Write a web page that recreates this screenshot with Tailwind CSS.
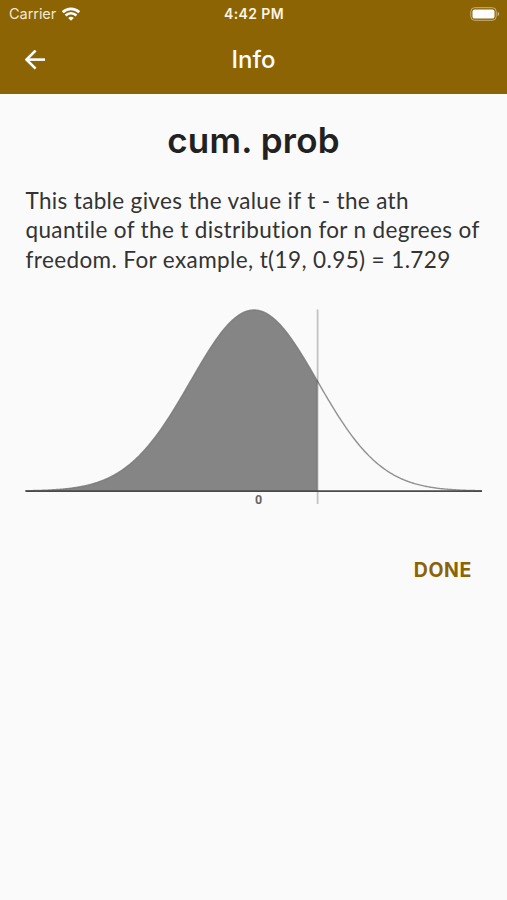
<!DOCTYPE html>
<html lang="en">
<head>
  <meta charset="UTF-8" />
  <meta name="viewport" content="width=device-width, initial-scale=1.0"/>
  <title>Info</title>
  <script src="https://cdn.jsdelivr.net/npm/@tailwindcss/browser@4"></script>
</head>
<body class="bg-[#fafafa] h-[900px] overflow-hidden font-['Lato','Open_Sans',sans-serif]">
  <header class="bg-[#8c6404] h-[94px] text-white">
    <!-- Status bar -->
    <div class="h-[27px] grid grid-cols-3 items-center pl-[9px] pr-[7px] font-['Inter',sans-serif]">
      <div class="flex items-center gap-[6px] text-[14.5px] text-[#f4e9d0]">
        <span class="tracking-[-0.05px]">Carrier</span>
        <svg class="w-[18px] h-[14px]" viewBox="0 0 18 14" fill="none" stroke="#fff" stroke-width="2.7">
          <path d="M0.8 5.2a11.6 11.6 0 0 1 16.4 0" />
          <path d="M3.6 8.5a7.6 7.6 0 0 1 10.8 0" />
          <path d="M9 13.8L6.2 11a4 4 0 0 1 5.6 0z" fill="#fff" stroke="none" />
        </svg>
      </div>
      <div class="-ml-[1px] text-center text-[14px] font-semibold tracking-[0.4px] whitespace-nowrap text-[#fdf6e6]">4:42 PM</div>
      <div class="flex justify-end">
        <svg class="w-[30px] h-[14px]" viewBox="0 0 30 14">
          <rect x="0.8" y="0.7" width="25.4" height="12.6" rx="3.8" fill="none" stroke="#c5b182" stroke-width="1" />
          <rect x="2.5" y="2.4" width="22" height="9.2" rx="2.2" fill="#fff" />
          <path d="M27.6 4.8v4.4c1-.4 1.6-1.2 1.6-2.2s-.6-1.8-1.6-2.2z" fill="#c5b182" />
        </svg>
      </div>
    </div>
    <!-- App bar -->
    <div class="h-[66px] grid grid-cols-3 items-center px-[25px]">
      <svg class="w-5 h-5" viewBox="0 0 20 20" fill="none" stroke="#fff" stroke-width="2.6">
        <path d="M20 9.6H2" />
        <path d="M10.6 0.5L1.5 9.6l9.1 9.1" />
      </svg>
      <h1 class="text-center text-2xl font-medium font-['Inter',sans-serif]">Info</h1>
    </div>
  </header>

  <main class="px-[25px]">
    <h2 class="pt-5 text-center text-[35px] leading-[52px] tracking-[0.2px] font-semibold text-[#212121] font-['Inter',sans-serif]">cum. prob</h2>
    <p class="mt-5 pl-[0.5px] text-[22.5px] leading-[29.3px] text-[#333] whitespace-nowrap">
      <span class="tracking-[0.34px]">This table gives the value if t - the ath</span><br />
      <span class="tracking-[0.35px]">quantile of the t distribution for n degrees of</span><br />
      <span class="tracking-[0.39px]">freedom. For example, t(19, 0.95) = 1.729</span>
    </p>

    <!-- Distribution curve, filled up to one sigma -->
    <svg class="mt-[33px] w-[457px] h-[208px]" viewBox="25 307 457 208">
      <path id="area" fill="#858585" />
      <path id="curve" fill="none" stroke="#777" stroke-opacity="0.8" stroke-width="1.4" />
      <path d="M317.6 309.5V504" stroke="#000" stroke-opacity="0.22" stroke-width="1.8" />
      <path d="M25.5 491.1H482.5" stroke="#4a4a4a" stroke-width="1.6" />
      <text x="258.6" y="504" text-anchor="middle" fill="#666" class="text-[12.5px] font-bold font-['Roboto',sans-serif]">0</text>
    </svg>

    <div class="mt-[38px] flex justify-end pr-[10px]">
      <button class="text-[19.5px] leading-[35px] font-bold tracking-[0.6px] text-[#8c6404] font-['Inter',sans-serif]">DONE</button>
    </div>
  </main>

  <script>
    const mean = 254, sigma = 63.5, base = 491, height = 181;

    function points(from, to) {
      const list = [];
      for (let x = from; x <= to; x += 1) {
        const z = (x - mean) / sigma;
        list.push(x + ' ' + (base - height * Math.exp(-z * z / 2)).toFixed(2));
      }
      return list.join('L');
    }

    document.getElementById('curve').setAttribute('d', 'M' + points(25.5, 482.5));
    document.getElementById('area').setAttribute('d', 'M' + points(25.5, 317.5) + 'V' + base + 'H25.5Z');
  </script>
</body>
</html>
